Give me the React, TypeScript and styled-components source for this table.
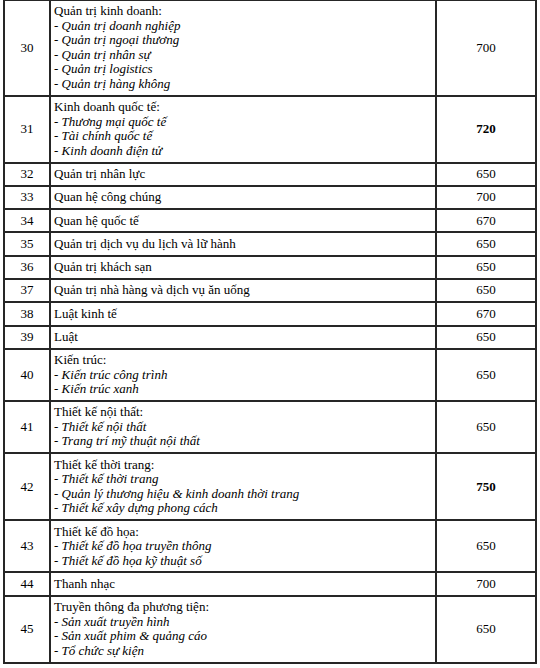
import React, { FC } from "react";
import styled, { createGlobalStyle } from "styled-components";

type Major = {
  no: number;
  title: string;
  items?: string[];
  score: number;
  highlight?: boolean;
};

const majors: Major[] = [
  {
    no: 30,
    title: "Quản trị kinh doanh:",
    items: [
      "Quản trị doanh nghiệp",
      "Quản trị ngoại thương",
      "Quản trị nhân sự",
      "Quản trị logistics",
      "Quản trị hàng không",
    ],
    score: 700,
  },
  {
    no: 31,
    title: "Kinh doanh quốc tế:",
    items: ["Thương mại quốc tế", "Tài chính quốc tế", "Kinh doanh điện tử"],
    score: 720,
    highlight: true,
  },
  { no: 32, title: "Quản trị nhân lực", score: 650 },
  { no: 33, title: "Quan hệ công chúng", score: 700 },
  { no: 34, title: "Quan hệ quốc tế", score: 670 },
  { no: 35, title: "Quản trị dịch vụ du lịch và lữ hành", score: 650 },
  { no: 36, title: "Quản trị khách sạn", score: 650 },
  { no: 37, title: "Quản trị nhà hàng và dịch vụ ăn uống", score: 650 },
  { no: 38, title: "Luật kinh tế", score: 670 },
  { no: 39, title: "Luật", score: 650 },
  {
    no: 40,
    title: "Kiến trúc:",
    items: ["Kiến trúc công trình", "Kiến trúc xanh"],
    score: 650,
  },
  {
    no: 41,
    title: "Thiết kế nội thất:",
    items: ["Thiết kế nội thất", "Trang trí mỹ thuật nội thất"],
    score: 650,
  },
  {
    no: 42,
    title: "Thiết kế thời trang:",
    items: [
      "Thiết kế thời trang",
      "Quản lý thương hiệu & kinh doanh thời trang",
      "Thiết kế xây dựng phong cách",
    ],
    score: 750,
    highlight: true,
  },
  {
    no: 43,
    title: "Thiết kế đồ họa:",
    items: ["Thiết kế đồ họa truyền thông", "Thiết kế đồ họa kỹ thuật số"],
    score: 650,
  },
  { no: 44, title: "Thanh nhạc", score: 700 },
  {
    no: 45,
    title: "Truyền thông đa phương tiện:",
    items: ["Sản xuất truyền hình", "Sản xuất phim & quảng cáo", "Tổ chức sự kiện"],
    score: 650,
  },
];

const App: FC = () => {
  return (
    <>
      <GlobalStyle />
      <Page>
        <ScoreTable>
          <colgroup>
            <Col $w={46} />
            <Col $w={386} />
            <Col $w={100} />
          </colgroup>
          <tbody>
            {majors.map((m) => (
              <tr key={m.no}>
                <NumberCell>{m.no}</NumberCell>
                <NameCell>
                  <Line>{m.title}</Line>
                  {m.items?.map((item) => (
                    <Line key={item}>
                      - <Sub>{item}</Sub>
                    </Line>
                  ))}
                </NameCell>
                <ScoreCell $bold={m.highlight}>{m.score}</ScoreCell>
              </tr>
            ))}
          </tbody>
        </ScoreTable>
      </Page>
    </>
  );
};

const GlobalStyle = createGlobalStyle`
  html, body {
    margin: 0;
    padding: 0;
    background: #ffffff;
  }
`;

const Page = styled.div`
  width: 540px;
  height: 668px;
  overflow: hidden;
  padding-left: 3px;
  box-sizing: border-box;
`;

const ScoreTable = styled.table`
  width: 532px;
  margin-top: -1px;
  border-collapse: collapse;
  table-layout: fixed;
`;

const Col = styled.col<{ $w: number }>`
  width: ${(p) => p.$w}px;
`;

const Cell = styled.td`
  font-family: "Liberation Serif", "Times New Roman", serif;
  font-size: 13px;
  line-height: 14.5px;
  color: #000;
  border: 2px solid #262626;
  padding: 3.4px 3px;
`;

const NumberCell = styled(Cell)`
  text-align: center;
  vertical-align: middle;
`;

const NameCell = styled(Cell)`
  text-align: left;
  vertical-align: top;
`;

const ScoreCell = styled(Cell)<{ $bold?: boolean }>`
  text-align: center;
  vertical-align: middle;
  font-weight: ${(p) => (p.$bold ? 700 : 400)};
`;

const Line = styled.div`
  white-space: nowrap;
`;

const Sub = styled.i`
  font-style: italic;
`;

export default App;
